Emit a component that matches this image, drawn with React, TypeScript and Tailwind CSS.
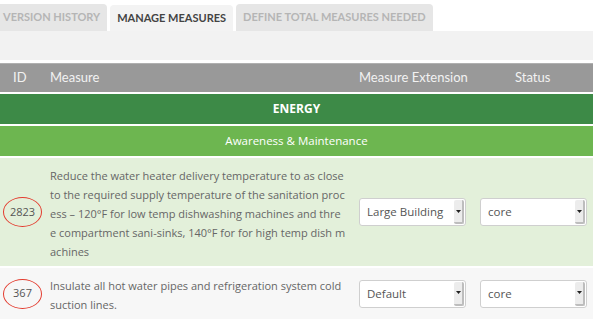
const tabs = [
  { label: "VERSION HISTORY", active: false },
  { label: "MANAGE MEASURES", active: true },
  { label: "DEFINE TOTAL MEASURES NEEDED", active: false },
];

type Row = { id: string; text: string; ext: string; status: string; bg: string };

const rows: Row[] = [
  {
    id: "2823",
    text: "Reduce the water heater delivery temperature to as close to the required supply temperature of the sanitation process – 120°F for low temp dishwashing machines and three compartment sani-sinks, 140°F for for high temp dish machines",
    ext: "Large Building",
    status: "core",
    bg: "bg-[#e3f0da]",
  },
  {
    id: "367",
    text: "Insulate all hot water pipes and refrigeration system cold suction lines.",
    ext: "Default",
    status: "core",
    bg: "bg-[#f7f7f7]",
  },
];

function Select({ value, width }: { value: string; width: string }) {
  return (
    <div
      className={`flex h-[28px] ${width} items-stretch rounded-[3px] border border-[#cfcfcf] bg-white text-[11.5px] text-[#555]`}
    >
      <span className="flex flex-1 items-center pl-[7px]">{value}</span>
      <span className="my-[1px] mr-[1px] flex w-[10px] items-center justify-center rounded-[2px] border-b-2 border-r-2 border-[#bdbdbd] bg-[#ececec]">
        <svg width="5" height="3" viewBox="0 0 5 3">
          <path d="M0 0h5L2.5 3z" fill="#222" />
        </svg>
      </span>
    </div>
  );
}

export default function App() {
  return (
    <div className="h-[320px] w-[600px] overflow-hidden bg-white font-['Open_Sans',sans-serif]">
      <div className="flex h-[31px] items-end gap-[3px] pt-[4px]">
        {tabs.map((t) => (
          <div
            key={t.label}
            className={
              t.active
                ? "flex h-[26px] items-center rounded-t-[4px] bg-[#f3f3f3] px-[7px] font-['Lato',sans-serif] text-[11px] font-bold text-[#444]"
                : "flex h-[27px] items-center rounded-t-[4px] bg-[#e6e6e6] px-[7px] font-['Lato',sans-serif] text-[11px] font-bold text-[#b5b5b5] first:-ml-[4px]"
            }
          >
            {t.label}
          </div>
        ))}
      </div>
      <div className="w-[593px]">
        <div className="h-[29px] bg-[#f2f2f2]" />
        <div className="mt-[3px] grid h-[29px] grid-cols-[50px_309px_121px_1fr] items-center border-t border-[#b0b0b0] bg-[#999999] font-['Lato',sans-serif] text-[13px] text-[#f2f2f2]">
          <span className="pl-[13px]">ID</span>
          <span>Measure</span>
          <span>Measure Extension</span>
          <span className="pl-[35px]">Status</span>
        </div>
        <div className="mt-[2px] flex h-[30px] items-center justify-center bg-[#3d8a47] text-[12px] font-bold text-white">
          ENERGY
        </div>
        <div className="mt-[2px] flex h-[30px] items-center justify-center bg-[#6db650] text-[11.5px] text-white">
          Awareness &amp; Maintenance
        </div>
        {rows.map((r) => (
          <div
            key={r.id}
            className={`mt-[2px] grid grid-cols-[50px_309px_121px_1fr] items-center ${r.bg} text-[11px] text-[#666]`}
          >
            <div className="pl-[3px]">
              <span className="flex h-[30px] w-[39px] items-center justify-center rounded-[50%] border border-[#e33b2e] text-[#555]">
                {r.id}
              </span>
            </div>
            <p className="w-[296px] break-all pb-[5px] pt-[8px] leading-[19px]">{r.text}</p>
            <Select value={r.ext} width="w-[107px]" />
            <Select value={r.status} width="w-[107px]" />
          </div>
        ))}
      </div>
    </div>
  );
}
